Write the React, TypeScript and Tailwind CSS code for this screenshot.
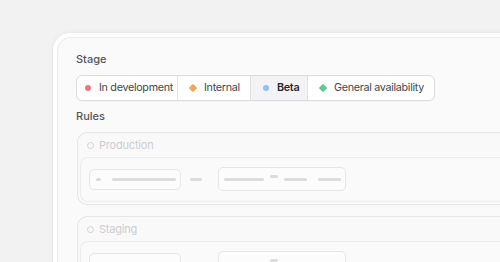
import { ReactNode } from 'react'

const stages = [
  { label: 'In development', dot: 'bg-[#f2747c] rounded-full', w: 'w-[100px]', active: false },
  { label: 'Internal', dot: 'bg-[#f5a55a] rotate-45 rounded-[1px]', w: 'w-[73px]', active: false },
  { label: 'Beta', dot: 'bg-[#8cc0f7] rounded-full', w: 'w-[57px]', active: true },
  { label: 'General availability', dot: 'bg-[#5fc993] rotate-45 rounded-[1px]', w: 'w-[127px]', active: false },
]

function Bar({ w }: { w: string }) {
  return <span className={`h-[3px] rounded-full bg-[#dcdcdf] ${w}`} />
}

function RuleCard({ title, children }: { title: string; children: ReactNode }) {
  return (
    <div className="rounded-tl-[10px] rounded-bl-[10px] border border-r-0 border-[#e6e6e8] bg-[#f9f9fa]">
      <div className="flex h-[24px] items-center gap-[5px] pl-[9px] text-[11px] tracking-[-0.2px] text-[#cdcdd0]">
        <span className="h-[7px] w-[7px] rounded-full border-[1.5px] border-[#d2d2d5]" />
        <span>{title}</span>
      </div>
      <div className="ml-[2px] mb-[2px] rounded-tl-[8px] rounded-bl-[8px] border border-r-0 border-[#ececee] bg-[#fafafa] pl-[8px] pt-[9px] pb-[10px]">
        {children}
      </div>
    </div>
  )
}

function RuleRow() {
  return (
    <div className="flex items-center">
      <div className="flex h-[21px] w-[92px] items-center gap-[11px] rounded-[5px] border border-[#e6e6e8] bg-[#fcfcfc] pl-[6px]">
        <Bar w="w-[5px]" />
        <Bar w="w-[64px]" />
      </div>
      <span className="ml-[9px] h-[3px] w-[12px] rounded-full bg-[#dcdcdf]" />
      <div className="ml-[16px] flex h-[24px] w-[128px] items-center rounded-[5px] border border-[#e6e6e8] bg-[#fcfcfc] pl-[5px]">
        <Bar w="w-[40px]" />
        <span className="ml-[6px] mb-[6px] h-[3px] w-[8px] rounded-full bg-[#dcdcdf]" />
        <span className="ml-[6px] h-[3px] w-[23px] rounded-full bg-[#dcdcdf]" />
        <span className="ml-[11px] h-[3px] w-[23px] rounded-full bg-[#dcdcdf]" />
      </div>
    </div>
  )
}

export default function App() {
  return (
    <div className="h-[262px] w-[500px] overflow-hidden bg-[#f2f2f3] pl-[52px] pt-[32px] font-['Inter',sans-serif]">
      <div className="h-[260px] w-[470px] rounded-tl-[18px] border border-r-0 border-b-0 border-[#e9e9eb] bg-white pl-[4px] pt-[4px] shadow-[0_0_6px_rgba(0,0,0,0.03)]">
        <div className="h-full rounded-tl-[14px] border border-r-0 border-b-0 border-[#ebebed] bg-[#fafafa] pl-[18px] pt-[13px]">
          <div className="text-[11px] leading-[16px] font-medium text-[#55555c]">Stage</div>
          <div className="mt-[8px] flex h-[26px] w-max rounded-[6px] border border-[#dcdce0] bg-white shadow-[0_1px_1px_rgba(0,0,0,0.03)]">
            {stages.map((s, i) => (
              <div
                key={s.label}
                className={`flex shrink-0 items-center gap-[8px] whitespace-nowrap text-[10.75px] tracking-[-0.3px] ${s.w} ${
                  i > 0 ? 'border-l border-[#e2e2e5] pl-[12px]' : 'pl-[8px] rounded-l-[6px]'
                } ${i === stages.length - 1 ? 'rounded-r-[6px]' : ''} ${
                  s.active ? 'bg-[#f3f3f5] font-semibold text-[#27272a]' : 'text-[#45454c]'
                }`}
              >
                <span className={`h-[6px] w-[6px] shrink-0 ${s.dot}`} />
                <span>{s.label}</span>
              </div>
            ))}
          </div>
          <div className="mt-[7px] text-[11px] leading-[16px] font-medium text-[#55555c]">Rules</div>
          <div className="mt-[8px] ml-[1px] flex flex-col gap-[11px]">
            <RuleCard title="Production">
              <RuleRow />
            </RuleCard>
            <RuleCard title="Staging">
              <RuleRow />
            </RuleCard>
          </div>
        </div>
      </div>
    </div>
  )
}
